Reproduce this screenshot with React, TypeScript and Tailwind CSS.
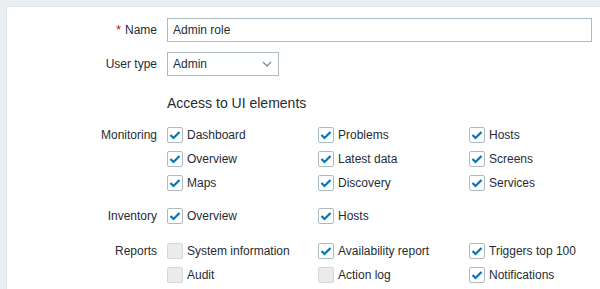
import { ReactNode } from 'react'

type Item = { label: string; checked: boolean } | null

const groups: { title: string; gap: string; rows: Item[][] }[] = [
  {
    title: 'Monitoring',
    gap: 'mt-0',
    rows: [
      [
        { label: 'Dashboard', checked: true },
        { label: 'Problems', checked: true },
        { label: 'Hosts', checked: true },
      ],
      [
        { label: 'Overview', checked: true },
        { label: 'Latest data', checked: true },
        { label: 'Screens', checked: true },
      ],
      [
        { label: 'Maps', checked: true },
        { label: 'Discovery', checked: true },
        { label: 'Services', checked: true },
      ],
    ],
  },
  {
    title: 'Inventory',
    gap: 'mt-[9px]',
    rows: [[{ label: 'Overview', checked: true }, { label: 'Hosts', checked: true }, null]],
  },
  {
    title: 'Reports',
    gap: 'mt-[11px]',
    rows: [
      [
        { label: 'System information', checked: false },
        { label: 'Availability report', checked: true },
        { label: 'Triggers top 100', checked: true },
      ],
      [
        { label: 'Audit', checked: false },
        { label: 'Action log', checked: false },
        { label: 'Notifications', checked: true },
      ],
    ],
  },
]

function Checkbox({ checked }: { checked: boolean }) {
  if (!checked) {
    return <span className="w-4 h-4 rounded-[2px] border border-[#d4d8da] bg-[#ebebeb]" />
  }
  return (
    <span className="w-4 h-4 rounded-[2px] border border-[#acbbc2] bg-white flex items-center justify-center">
      <svg width="14" height="14" viewBox="0 0 14 14">
        <path d="M2.5 7 L5.5 10 L11.5 4" fill="none" stroke="#0275b8" strokeWidth="2.2" />
      </svg>
    </span>
  )
}

function Row({ label, children, className = '' }: { label: ReactNode; children: ReactNode; className?: string }) {
  return (
    <div className={`grid grid-cols-[150px_1fr] gap-x-[10px] ${className}`}>
      <div className="h-6 flex items-center justify-end">{label}</div>
      <div>{children}</div>
    </div>
  )
}

export default function App() {
  return (
    <div className="h-[289px] bg-[#ebeef0] pt-[6px] pl-[6px] overflow-hidden" style={{ fontFamily: '"Liberation Sans", Arial, sans-serif' }}>
      <div className="bg-white border-t border-l border-[#dfe4e7] h-[283px] pt-[11px] text-[12px] text-[#1f2c33]">
        <Row
          label={
            <span>
              <span className="text-[#d40000] mr-[4px]">*</span>Name
            </span>
          }
        >
          <div className="w-[425px] h-6 border border-[#acbbc2] flex items-center px-[5px]">Admin role</div>
        </Row>

        <Row label="User type" className="mt-[10px]">
          <div className="w-[112px] h-6 border border-[#acbbc2] flex items-center justify-between pl-[5px] pr-[6px]">
            <span>Admin</span>
            <svg width="10" height="6" viewBox="0 0 10 6">
              <path d="M1 1 L5 5 L9 1" fill="none" stroke="#768d99" strokeWidth="1.3" />
            </svg>
          </div>
        </Row>

        <div className="grid grid-cols-[150px_1fr] gap-x-[10px] mt-[19px] mb-[12px]">
          <div />
          <div className="text-[14px] leading-4">Access to UI elements</div>
        </div>

        {groups.map((g) => (
          <Row key={g.title} label={g.title} className={g.gap}>
            {g.rows.map((r, i) => (
              <div key={i} className="grid grid-cols-[151px_151px_151px]">
                {r.map((it, j) =>
                  it ? (
                    <div key={j} className="h-6 flex items-center gap-[4px]">
                      <Checkbox checked={it.checked} />
                      <span>{it.label}</span>
                    </div>
                  ) : (
                    <div key={j} />
                  )
                )}
              </div>
            ))}
          </Row>
        ))}
      </div>
    </div>
  )
}
